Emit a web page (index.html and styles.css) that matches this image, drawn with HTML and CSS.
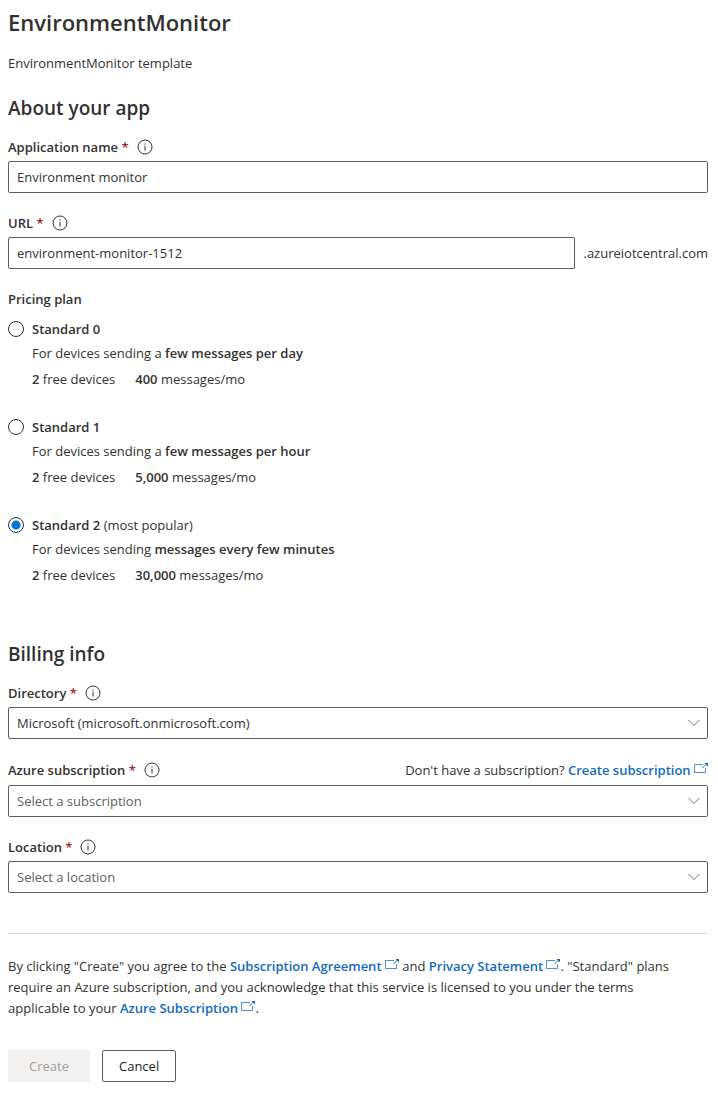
FILE: index.html
```html
<!DOCTYPE html>
<html lang="en">
<head>
<meta charset="utf-8">
<title>EnvironmentMonitor</title>
<meta name="viewport" content="width=device-width, initial-scale=1">
<link rel="stylesheet" href="styles.css">
</head>
<body>
<svg class="sprite" aria-hidden="true">
  <symbol id="info" viewBox="0 0 16 16">
    <circle cx="8" cy="8" r="7" fill="none" stroke="currentColor"/>
    <path d="M8 6.8v4.7M8 4.4v1.2" fill="none" stroke="currentColor"/>
  </symbol>
  <symbol id="chevron" viewBox="0 0 12 8">
    <path d="M.5 1 6 6.5 11.5 1" fill="none" stroke="currentColor"/>
  </symbol>
  <symbol id="external" viewBox="0 0 14 10">
    <path d="M9 1.5H.5v8h11V5" fill="none" stroke="currentColor" opacity=".75"/>
    <path d="M8.5 5 12.5 1" fill="none" stroke="currentColor"/>
    <path d="M10.5 0H14v3.5z" fill="currentColor"/>
  </symbol>
</svg>
<main class="page">
  <h1 class="title">EnvironmentMonitor</h1>
  <p class="subtitle">EnvironmentMonitor template</p>
  <form class="form">
    <section>
      <h2 class="heading">About your app</h2>
      <div class="field">
        <div class="label-row">
          <label class="label" for="app-name">Application name <span class="required">*</span></label>
          <svg class="info"><use href="#info"/></svg>
        </div>
        <input class="control" id="app-name" type="text" value="Environment monitor">
      </div>
      <div class="field">
        <div class="label-row">
          <label class="label" for="url">URL <span class="required">*</span></label>
          <svg class="info"><use href="#info"/></svg>
        </div>
        <div class="url-row">
          <input class="control" id="url" type="text" value="environment-monitor-1512">
          <span>.azureiotcentral.com</span>
        </div>
      </div>
      <fieldset class="plans">
        <legend class="label legend">Pricing plan</legend>
        <div class="plan">
          <input class="radio" id="plan0" type="radio" name="plan">
          <label for="plan0"><b>Standard 0</b></label>
          <div class="plan-text">For devices sending a <b>few messages per day</b></div>
          <div class="plan-facts"><span><b>2</b> free devices</span><span><b>400</b> messages/mo</span></div>
        </div>
        <div class="plan">
          <input class="radio" id="plan1" type="radio" name="plan">
          <label for="plan1"><b>Standard 1</b></label>
          <div class="plan-text">For devices sending a <b>few messages per hour</b></div>
          <div class="plan-facts"><span><b>2</b> free devices</span><span><b>5,000</b> messages/mo</span></div>
        </div>
        <div class="plan">
          <input class="radio" id="plan2" type="radio" name="plan" checked>
          <label for="plan2"><b>Standard 2</b> (most popular)</label>
          <div class="plan-text">For devices sending <b>messages every few minutes</b></div>
          <div class="plan-facts"><span><b>2</b> free devices</span><span><b>30,000</b> messages/mo</span></div>
        </div>
      </fieldset>
    </section>
    <section class="billing">
      <h2 class="heading">Billing info</h2>
      <div class="field">
        <div class="label-row">
          <label class="label" for="directory">Directory <span class="required">*</span></label>
          <svg class="info"><use href="#info"/></svg>
        </div>
        <div class="select">
          <select class="control" id="directory"><option>Microsoft (microsoft.onmicrosoft.com)</option></select>
          <svg class="chevron"><use href="#chevron"/></svg>
        </div>
      </div>
      <div class="field">
        <div class="label-row label-row-tall">
          <label class="label" for="subscription">Azure subscription <span class="required">*</span></label>
          <svg class="info"><use href="#info"/></svg>
          <span class="hint">Don't have a subscription? <a class="link" href="#">Create subscription <svg class="external"><use href="#external"/></svg></a></span>
        </div>
        <div class="select">
          <select class="control placeholder" id="subscription"><option>Select a subscription</option></select>
          <svg class="chevron"><use href="#chevron"/></svg>
        </div>
      </div>
      <div class="field">
        <div class="label-row">
          <label class="label" for="location">Location <span class="required">*</span></label>
          <svg class="info"><use href="#info"/></svg>
        </div>
        <div class="select">
          <select class="control placeholder" id="location"><option>Select a location</option></select>
          <svg class="chevron"><use href="#chevron"/></svg>
        </div>
      </div>
    </section>
    <footer class="footer">
      <p class="terms">By clicking "Create" you agree to the <a class="link" href="#">Subscription Agreement <svg class="external"><use href="#external"/></svg></a> and <a class="link" href="#">Privacy Statement <svg class="external"><use href="#external"/></svg></a>. "Standard" plans require an Azure subscription, and you acknowledge that this service is licensed to you under the terms applicable to your <a class="link" href="#">Azure Subscription <svg class="external"><use href="#external"/></svg></a>.</p>
      <div class="actions">
        <button class="button" type="submit" disabled>Create</button>
        <button class="button button-outline" type="button">Cancel</button>
      </div>
    </footer>
  </form>
</main>
</body>
</html>
```
FILE: styles.css
```css
* { box-sizing: border-box; }

body {
  margin: 0;
  background: #fff;
  color: #323130;
  font: 13px/20px "Segoe UI", "Open Sans", "Noto Sans", sans-serif;
}

.sprite { display: none; }
b { font-weight: 600; }
.page { padding: 8px 10px 15px 8px; }

.title { margin: 0 0 17px; font-size: 22px; line-height: 28px; font-weight: 600; }
.subtitle { margin: 0 0 21px; }
.heading { margin: 0 0 15px; font-size: 19px; line-height: 28px; font-weight: 600; }

.field { margin-bottom: 20px; }
.label-row { display: flex; align-items: center; margin-bottom: 4px; }
.label-row-tall { min-height: 22px; }
.label { font-weight: 600; }
.required { color: #a4262c; }
.info { width: 16px; height: 16px; margin-left: 8px; }

.control {
  display: block;
  width: 100%;
  min-width: 0;
  height: 32px;
  padding: 0 8px;
  border: 1px solid #605e5c;
  border-radius: 2px;
  background: #fff;
  color: inherit;
  font: inherit;
  appearance: none;
}

.placeholder { color: #605e5c; }
.url-row { display: flex; align-items: center; gap: 8px; }
.select { position: relative; }

.chevron {
  position: absolute;
  top: 12px;
  right: 8px;
  width: 12px;
  height: 8px;
  color: #8a6450;
  pointer-events: none;
}

.plans { margin: 0; padding: 0; border: 0; }
.legend { padding: 0; margin-bottom: 10px; }
.plan { display: grid; grid-template-columns: 16px 1fr; column-gap: 8px; align-items: center; margin-bottom: 28px; }
.plan:last-child { margin-bottom: 0; }
.plan-text { grid-column: 2; margin-top: 4px; }
.plan-facts { grid-column: 2; display: flex; gap: 20px; margin-top: 6px; }

.radio {
  width: 16px;
  height: 16px;
  margin: 0;
  border: 1px solid #323130;
  border-radius: 50%;
  background: #fff;
  appearance: none;
}

.radio:checked { background: radial-gradient(circle, #0078d4 4px, #fff 5px); }

.billing { margin-top: 55px; }
.hint { margin-left: auto; }
.link { color: #136ac1; font-weight: 600; text-decoration: none; }
.external { width: 14px; height: 10px; vertical-align: 2px; }

.footer { margin-top: 40px; padding-top: 22px; border-top: 1px solid #d6d6d6; }
.terms { margin: 0 0 31px; padding-right: 12px; line-height: 21px; }
.actions { display: flex; gap: 12px; }

.button {
  height: 32px;
  padding: 0 20px;
  border: 1px solid #f3f2f1;
  border-radius: 2px;
  background: #f3f2f1;
  color: #a19f9d;
  font: inherit;
}

.button-outline { padding: 0 16px; border-color: #605e5c; background: #fff; color: #201f1e; }
```
